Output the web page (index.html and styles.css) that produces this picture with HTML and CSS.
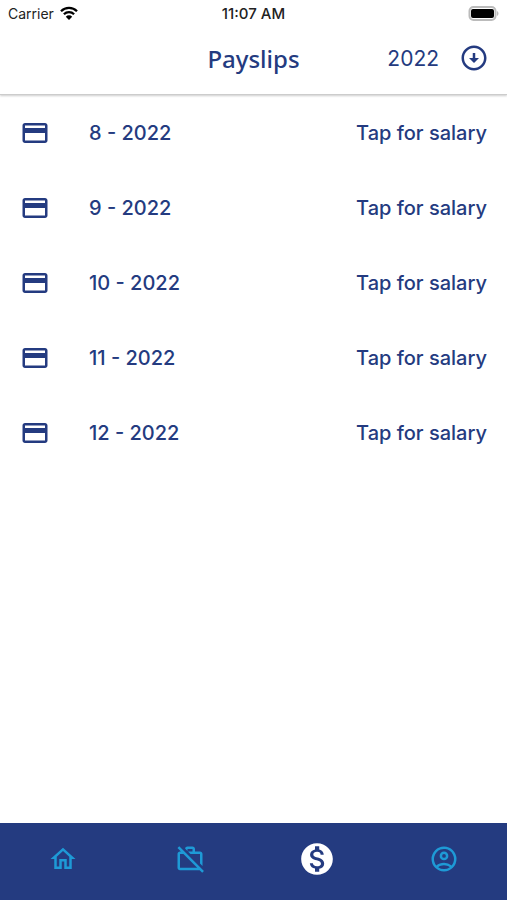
FILE: index.html
```html
<!DOCTYPE html>
<html lang="en">
<head>
    <meta charset="UTF-8">
    <meta name="viewport" content="width=device-width, initial-scale=1.0">
    <title>Payslips</title>
    <link rel="stylesheet" href="styles.css">
</head>
<body>
    <!-- Icons shared by the page -->
    <svg class="sprite" aria-hidden="true">
        <symbol id="icon-card" viewBox="0 0 24 24">
            <path d="M20 4H4c-1.11 0-1.99.89-1.99 2L2 18c0 1.11.89 2 2 2h16c1.11 0 2-.89 2-2V6c0-1.11-.89-2-2-2zm0 14H4v-6h16v6zm0-10H4V6h16v2z"/>
        </symbol>
    </svg>

    <header class="header">
        <div class="status-bar">
            <div class="carrier">
                <span>Carrier</span>
                <svg class="wifi" viewBox="0 0 18 14" aria-hidden="true">
                    <path d="M1 5.2a11.4 11.4 0 0 1 16 0M3.9 8.2a7.3 7.3 0 0 1 10.2 0" fill="none" stroke="#000" stroke-width="2.3"/>
                    <path d="M9 14l-3.2-3.3a4.5 4.5 0 0 1 6.4 0z"/>
                </svg>
            </div>
            <div class="clock">11:07 AM</div>
            <svg class="battery" viewBox="0 0 31 15" aria-hidden="true">
                <rect x="1.500" y="1" width="26" height="13" rx="4" fill="#fff" stroke="#bbb" stroke-width="2"/>
                <rect x="3" y="3" width="23" height="9" rx="2"/>
                <path d="M29 5c2 1 2 4 0 5z" fill="#bbb"/>
            </svg>
        </div>
        <div class="app-bar">
            <h1>Payslips</h1>
            <button class="year" type="button" aria-label="Select year, 2022">
                <span>2022</span>
                <svg class="icon" viewBox="0 0 24 24" aria-hidden="true">
                    <path d="M12 4c4.41 0 8 3.59 8 8s-3.59 8-8 8-8-3.59-8-8 3.59-8 8-8m0-2C6.48 2 2 6.48 2 12s4.48 10 10 10 10-4.48 10-10S17.52 2 12 2zm1 10V8h-2v4H8l4 4 4-4h-3z"/>
                </svg>
            </button>
        </div>
    </header>

    <main>
        <ul class="payslips">
            <li class="payslip">
                <svg class="icon" aria-hidden="true"><use href="#icon-card"/></svg>
                <span class="period">8 - 2022</span>
                <button class="salary" type="button">Tap for salary</button>
            </li>
            <li class="payslip">
                <svg class="icon" aria-hidden="true"><use href="#icon-card"/></svg>
                <span class="period">9 - 2022</span>
                <button class="salary" type="button">Tap for salary</button>
            </li>
            <li class="payslip">
                <svg class="icon" aria-hidden="true"><use href="#icon-card"/></svg>
                <span class="period">10 - 2022</span>
                <button class="salary" type="button">Tap for salary</button>
            </li>
            <li class="payslip">
                <svg class="icon" aria-hidden="true"><use href="#icon-card"/></svg>
                <span class="period">11 - 2022</span>
                <button class="salary" type="button">Tap for salary</button>
            </li>
            <li class="payslip">
                <svg class="icon" aria-hidden="true"><use href="#icon-card"/></svg>
                <span class="period">12 - 2022</span>
                <button class="salary" type="button">Tap for salary</button>
            </li>
        </ul>
    </main>

    <nav class="tabs">
        <a href="#home" aria-label="Home">
            <svg class="icon" viewBox="0 0 24 24" aria-hidden="true">
                <path d="M12 5.69l5 4.5V18h-2v-6H9v6H7v-7.81l5-4.5M12 3L2 12h3v8h6v-6h2v6h6v-8h3L12 3z"/>
            </svg>
        </a>
        <a href="#leave" aria-label="Leave">
            <svg class="icon" viewBox="0 0 24 24" aria-hidden="true">
                <path d="M10 4h4v2h-3.6l2 2H20v7.6l2 2V8c0-1.11-.89-2-2-2h-4V4c0-1.11-.89-2-2-2h-4c-.99 0-1.8.7-1.96 1.64L10 5.6V4zM3.4 1.84L1.99 3.25 4.74 6H4c-1.11 0-1.99.89-1.99 2L2 19c0 1.11.89 2 2 2h15.74l2 2 1.41-1.41L3.4 1.84zM4 19V8h2.74l11 11H4z"/>
            </svg>
        </a>
        <a class="active" href="#payslips" aria-label="Payslips" aria-current="page">
            <svg class="icon" viewBox="0 0 24 24" aria-hidden="true">
                <path d="M12 2C6.48 2 2 6.48 2 12s4.48 10 10 10 10-4.48 10-10S17.52 2 12 2zm1.41 16.09V20h-2.67v-1.93c-1.71-.36-3.16-1.46-3.27-3.4h1.96c.1 1.05.82 1.87 2.65 1.87 1.96 0 2.4-.98 2.4-1.59 0-.83-.44-1.61-2.67-2.14-2.48-.6-4.18-1.62-4.18-3.67 0-1.72 1.39-2.84 3.11-3.21V4h2.67v1.95c1.86.45 2.79 1.86 2.85 3.39H14.3c-.05-1.11-.64-1.87-2.22-1.87-1.5 0-2.4.68-2.4 1.64 0 .84.65 1.39 2.67 1.91s4.18 1.39 4.18 3.91c-.01 1.83-1.38 2.83-3.12 3.16z"/>
            </svg>
        </a>
        <a href="#profile" aria-label="Profile">
            <svg class="icon" viewBox="0 0 24 24" aria-hidden="true">
                <path fill-rule="evenodd" d="M12 2a10 10 0 1 0 0 20 10 10 0 0 0 0-20zM7.35 18.5C8.66 17.56 10.26 17 12 17s3.34.56 4.65 1.5A7.9 7.9 0 0 1 12 20a7.9 7.9 0 0 1-4.65-1.5zm10.79-1.38A9.95 9.95 0 0 0 12 15c-2.32 0-4.45.8-6.14 2.12A8 8 0 1 1 20 12c0 1.95-.7 3.73-1.86 5.12zM12 6a3.5 3.5 0 1 0 0 7 3.5 3.5 0 0 0 0-7zm0 5a1.5 1.5 0 1 1 0-3 1.5 1.5 0 0 1 0 3z"/>
            </svg>
        </a>
    </nav>
</body>
</html>
```
FILE: styles.css
```css
* {
    box-sizing: border-box;
}
body {
    margin: 0;
    min-height: 100vh;
    display: flex;
    flex-direction: column;
    background: #fff;
    color: #243b80;
    font-family: Inter, "Liberation Sans", sans-serif;
}
h1, ul {
    margin: 0;
    padding: 0;
}
button {
    border: 0;
    padding: 0;
    background: none;
    color: inherit;
    font: inherit;
    cursor: pointer;
}
.sprite {
    display: none;
}
.icon {
    width: 30px;
    height: 30px;
    fill: currentColor;
}

/* Header */
.header {
    border-bottom: 1px solid #ccc;
    box-shadow: 0 1px 2px rgba(0, 0, 0, 0.2);
}
.status-bar, .app-bar {
    display: grid;
    grid-template-columns: 1fr auto 1fr;
    align-items: center;
}
.status-bar {
    height: 26px;
    padding: 0 8px;
    color: #222;
    font-size: 14px;
}
.carrier {
    display: flex;
    align-items: center;
    gap: 6px;
}
.wifi {
    width: 18px;
    height: 14px;
}
.clock {
    font-size: 15px;
    font-weight: 500;
}
.battery {
    width: 31px;
    height: 15px;
    justify-self: end;
}
.app-bar {
    height: 68px;
    padding: 0 18px 4px;
}
.app-bar h1 {
    grid-column: 2;
    font-family: "Noto Sans", sans-serif;
    font-size: 24px;
    font-weight: 500;
}
.year {
    justify-self: end;
    display: flex;
    align-items: center;
    gap: 20px;
    font-size: 21px;
}

/* Payslip list */
main {
    flex: 1;
}
.payslips {
    list-style: none;
}
.payslip {
    display: flex;
    align-items: center;
    height: 75px;
    padding: 0 20px;
    font-size: 20px;
    font-weight: 450;
}
.period {
    flex: 1;
    margin-left: 39px;
}

/* Bottom navigation */
.tabs {
    display: flex;
    height: 77px;
    padding-bottom: 5px;
    background: #243b80;
}
.tabs a {
    flex: 1;
    display: flex;
    align-items: center;
    justify-content: center;
    color: #1e9ad6;
}
.tabs .active {
    color: #fff;
}
.tabs .active .icon {
    width: 38px;
    height: 38px;
}
```
